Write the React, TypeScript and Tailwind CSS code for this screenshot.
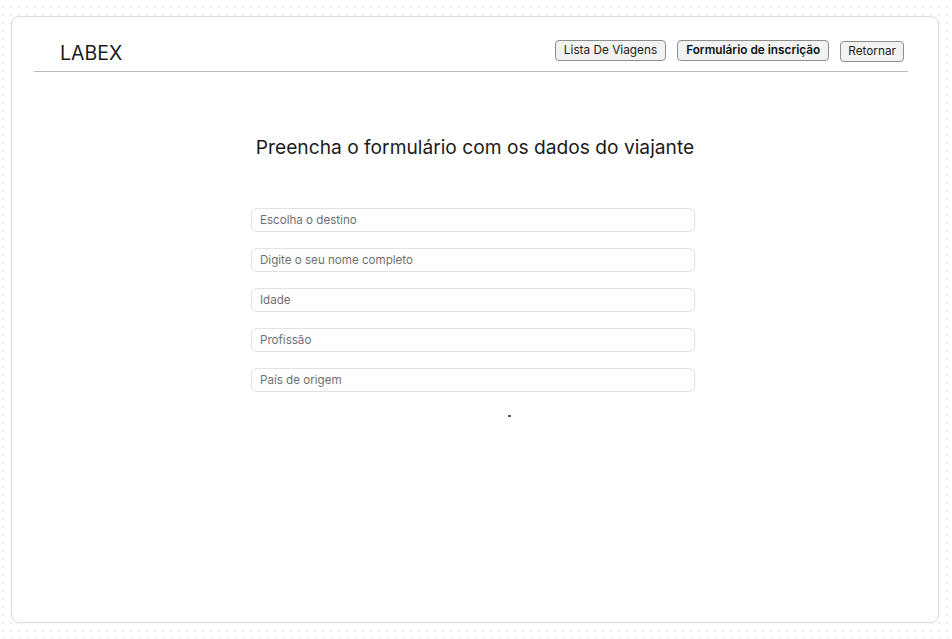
import React from "react";

const fields = [
  "Escolha o destino",
  "Digite o seu nome completo",
  "Idade",
  "Profissão",
  "País de origem",
];

const App = () => {
  return (
    <div
      className="min-h-screen w-full bg-white pl-[11px] pr-[13px] pt-[16px] pb-[16px]"
      style={{
        backgroundImage: "radial-gradient(#ececec 1px, transparent 1px)",
        backgroundSize: "8px 8px",
        backgroundPosition: "-1px 3px",
        fontFamily: "Inter, 'Noto Sans', sans-serif",
      }}
    >
      <div className="h-[607px] rounded-lg border border-[#dcdcdc] bg-white pt-[23px]">
        <header className="ml-[22px] mr-[30px] flex items-end justify-between border-b-[1.5px] border-[#b9b9b9] pb-[5px]">
          <h1 className="pl-[26px] text-[19.5px] leading-[26px] text-[#1c1c1c]">LABEX</h1>
          <nav className="mb-[4px] flex items-start gap-[11px] pr-[4px]">
            <button className="h-[21px] rounded-[4px] border border-[#8e8e8e] bg-[#f2f2f2] px-[8px] text-[11.8px] leading-[19px] text-[#222]">
              Lista De Viagens
            </button>
            <button className="h-[21px] rounded-[4px] border border-[#8e8e8e] bg-[#f2f2f2] px-[8px] text-[11.8px] font-semibold leading-[19px] text-[#111]">
              Formulário de inscrição
            </button>
            <button className="mt-[1px] h-[21px] rounded-[4px] border border-[#8e8e8e] bg-[#f2f2f2] px-[7px] text-[11.8px] leading-[19px] text-[#222]">
              Retornar
            </button>
          </nav>
        </header>

        <main className="flex flex-col items-center">
          <h2 className="mt-[61px] text-[19.2px] leading-[28px] text-[#1c1c1c]">
            Preencha o formulário com os dados do viajante
          </h2>
          <form className="mr-[4px] mt-[47px] flex w-[444px] flex-col gap-[16px]">
            {fields.map((f) => (
              <input
                key={f}
                type="text"
                placeholder={f}
                className="h-[24px] w-full rounded-[6px] border border-[#e2e2e2] px-[8px] text-[11.6px] text-[#333] placeholder:text-[#6f6f6f] outline-none"
              />
            ))}
            <div className="flex justify-center">
              <button type="submit" className="ml-[72px] mt-[7px] h-[2px] w-[3px] bg-[#555]"></button>
            </div>
          </form>
        </main>
      </div>
    </div>
  );
};

export default App;
